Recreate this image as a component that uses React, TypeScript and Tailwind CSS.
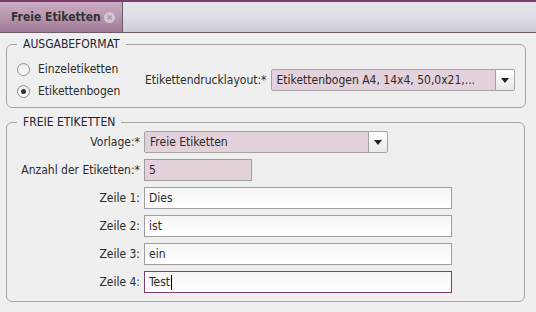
import React from "react";

const font = "font-['DejaVu_Sans_Condensed','DejaVu_Sans',sans-serif] font-stretch-condensed";

const Radio = ({ checked, label }: { checked?: boolean; label: string }) => (
  <div className="flex h-[22px] items-center gap-[8px]">
    <span className="flex h-[13px] w-[13px] items-center justify-center rounded-full border border-[#8f8f8f] bg-gradient-to-b from-[#e9e9e9] to-white">
      {checked && <span className="h-[5px] w-[5px] rounded-full bg-[#333]" />}
    </span>
    <span className="text-[12px] text-[#2b2b2b]">{label}</span>
  </div>
);

const Select = ({ value, className }: { value: string; className: string }) => (
  <div className={`flex h-[22px] border border-[#a3a3a3] rounded-[2px] ${className}`}>
    <div className="flex flex-1 items-center truncate bg-[#e3d1db] pl-[5px] text-[12px] text-[#2b2b2b]">
      {value}
    </div>
    <div className="flex w-[19px] items-center justify-center rounded-r-[2px] border-l border-[#a3a3a3] bg-gradient-to-b from-white to-[#e8e8e8]">
      <svg width="8" height="5" viewBox="0 0 8 5">
        <path d="M0 0h8L4 5z" fill="#222" />
      </svg>
    </div>
  </div>
);

const Field = ({ value, caret, pink, className }: { value: string; caret?: boolean; pink?: boolean; className: string }) => (
  <div
    className={`flex h-[22px] items-center pl-[4px] text-[12px] text-[#2b2b2b] border ${
      caret ? "border-[#7f3c6c]" : "border-[#9e9e9e]"
    } ${pink ? "bg-[#e3d1db]" : "bg-gradient-to-b from-[#f5f5f5] to-white"} ${className}`}
  >
    {value}
    {caret && <span className="ml-[1px] h-[15px] w-[1px] bg-black" />}
  </div>
);

const Row = ({ label, children }: { label: string; children: React.ReactNode }) => (
  <div className="flex h-[22px] items-center gap-[4px]">
    <div className="w-[123px] text-right text-[12px] text-[#2b2b2b]">{label}</div>
    {children}
  </div>
);

export default function App() {
  return (
    <div className={`h-[312px] w-[536px] bg-[#efefef] ${font}`}>
      <div className="flex h-[33px] border-t-2 border-b border-t-[#7d3c6e] border-b-[#6b5b66] bg-gradient-to-b from-[#e4e4eb] via-[#dfdfe7] to-[#cbcbd4]">
        <div className="flex w-[123px] items-center border-r border-[#6b5b66] bg-gradient-to-b from-[#c9abc2] via-[#b996b0] to-[#9f7a97] pl-[11px]">
          <span className="text-[12px] font-bold text-[#333]">Freie Etiketten</span>
          <span className="ml-[3px] flex h-[11px] w-[11px] items-center justify-center rounded-full bg-[#d2c6d0]">
            <svg width="7" height="7" viewBox="0 0 7 7">
              <path d="M1.5 1.5l4 4M5.5 1.5l-4 4" stroke="#a898a5" strokeWidth="1.6" />
            </svg>
          </span>
        </div>
      </div>

      <fieldset className="ml-[6px] mr-[12px] mt-[4px] rounded-[6px] border border-[#a5a5a5] px-[10px] pb-[5px] pt-[7px]">
        <legend className="px-[6px] text-[12px] leading-[14px] text-[#22223a]">AUSGABEFORMAT</legend>
        <div className="flex items-center">
          <div className="flex w-[128px] flex-col">
            <Radio label="Einzeletiketten" />
            <Radio label="Etikettenbogen" checked />
          </div>
          <span className="text-[12px] text-[#2b2b2b]">Etikettendrucklayout:*</span>
          <Select value="Etikettenbogen A4, 14x4, 50,0x21,..." className="ml-[4px] w-[244px]" />
        </div>
      </fieldset>

      <fieldset className="ml-[6px] mr-[11px] mt-[7px] rounded-[6px] border border-[#a5a5a5] px-[10px] pb-[8px] pt-[2px]">
        <legend className="px-[6px] text-[12px] leading-[14px] text-[#22223a]">FREIE ETIKETTEN</legend>
        <div className="flex flex-col gap-[6px]">
          <Row label="Vorlage:*">
            <Select value="Freie Etiketten" className="w-[244px]" />
          </Row>
          <Row label="Anzahl der Etiketten:*">
            <Field value="5" pink className="w-[108px]" />
          </Row>
          <Row label="Zeile 1:">
            <Field value="Dies" className="w-[308px]" />
          </Row>
          <Row label="Zeile 2:">
            <Field value="ist" className="w-[308px]" />
          </Row>
          <Row label="Zeile 3:">
            <Field value="ein" className="w-[308px]" />
          </Row>
          <Row label="Zeile 4:">
            <Field value="Test" caret className="w-[308px]" />
          </Row>
        </div>
      </fieldset>
    </div>
  );
}
